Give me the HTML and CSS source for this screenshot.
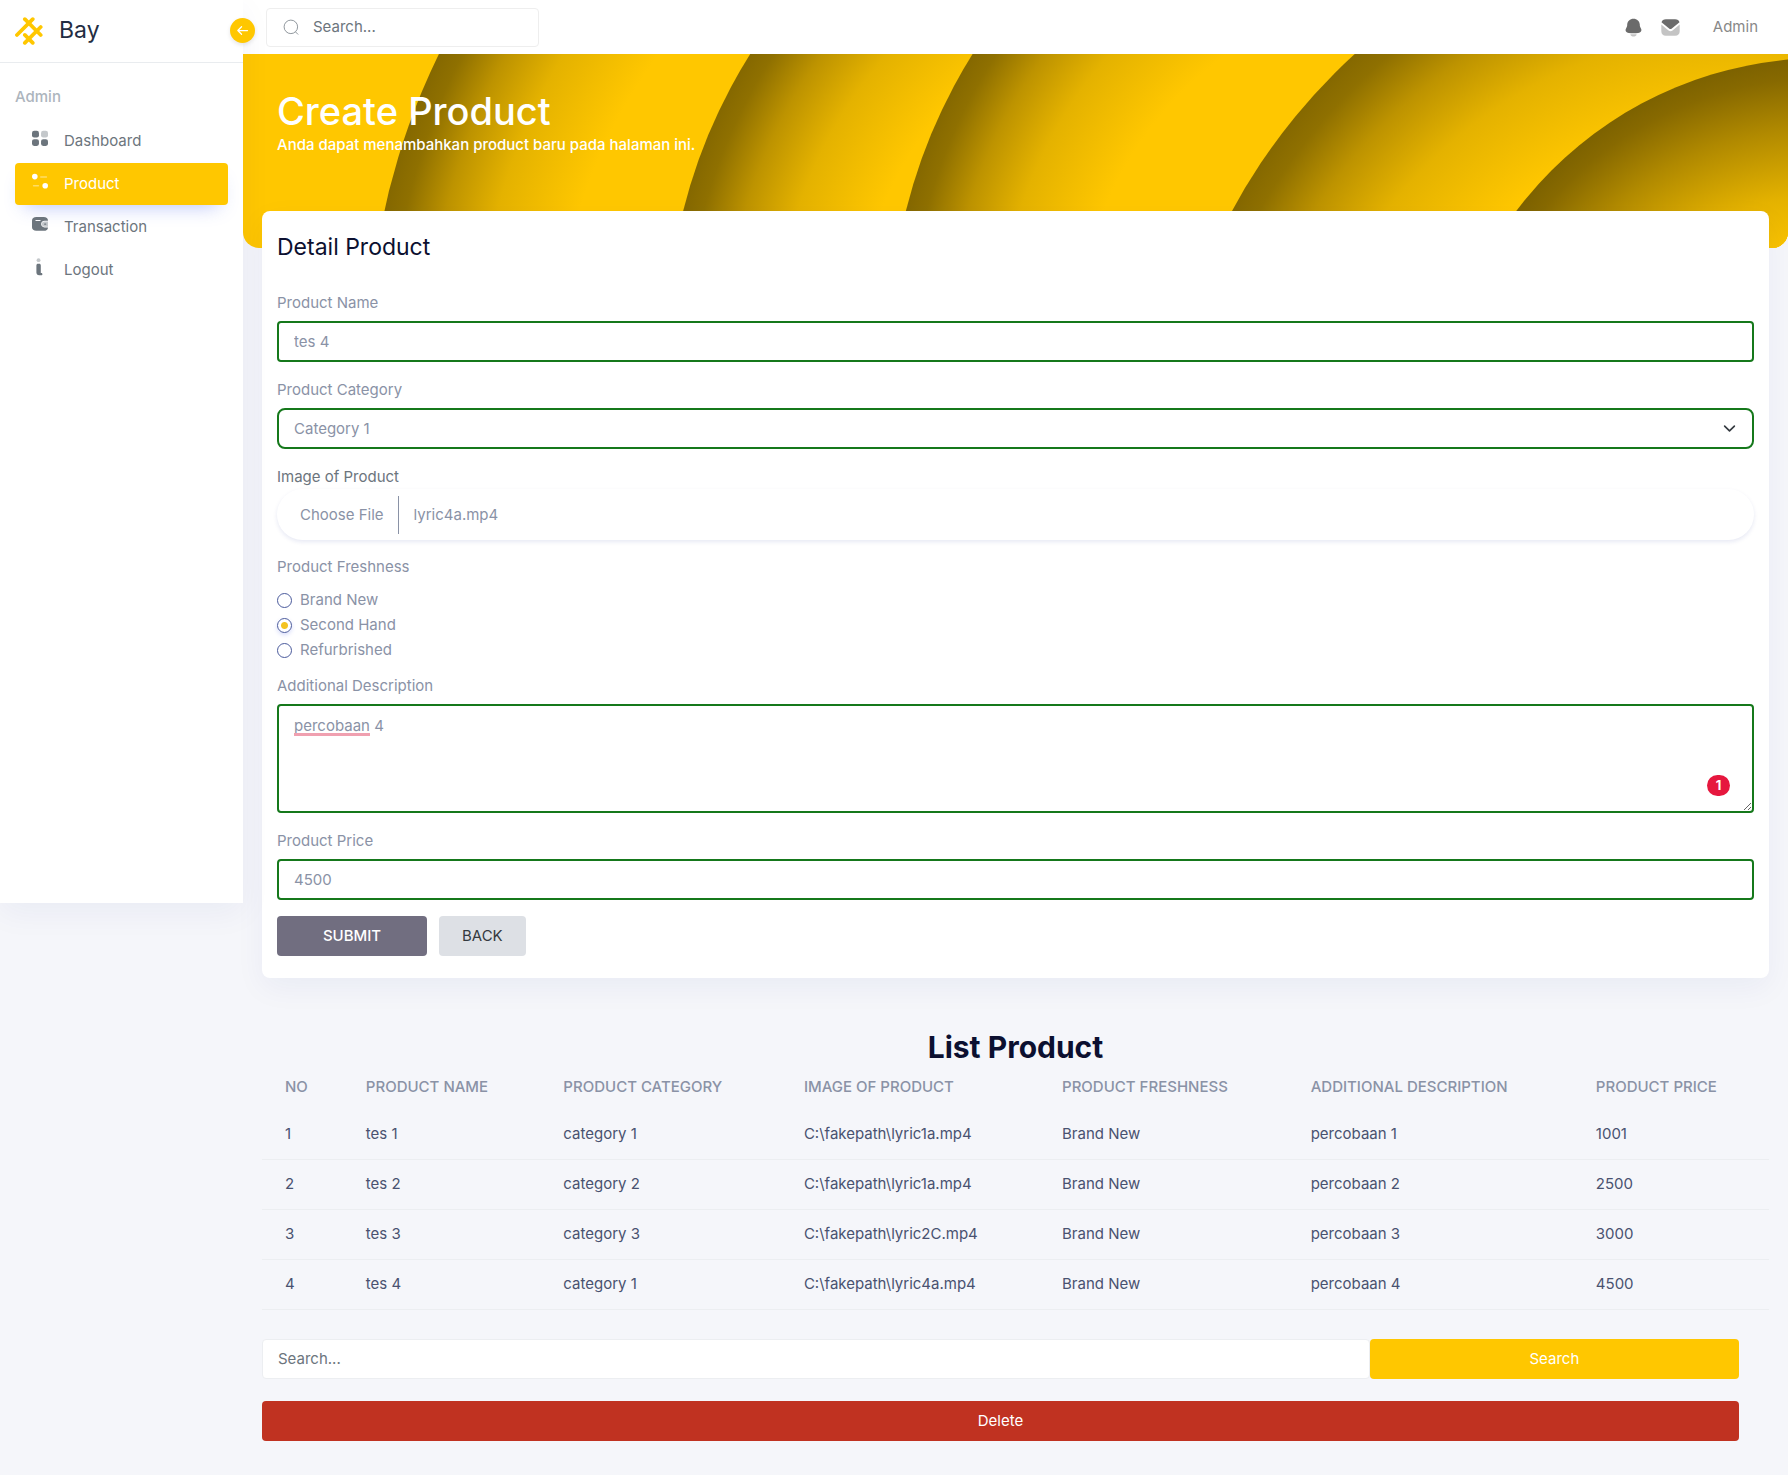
FILE: index.html
```html
<!DOCTYPE html>
<html lang="id">
<head>
<meta charset="utf-8">
<meta name="viewport" content="width=device-width, initial-scale=1">
<title>Create Product</title>
<link rel="stylesheet" href="styles.css">
</head>
<body>
<div class="layout">
  <aside class="sidebar">
    <div class="brand">
      <svg class="brand-logo" viewBox="0 0 30 30" aria-hidden="true">
        <rect x="-0.757" y="19.243" width="28" height="4" rx="2" transform="rotate(-45 -0.757 19.243)"/>
        <rect x="7.728" y="27.728" width="28" height="4" rx="2" transform="rotate(-45 7.728 27.728)"/>
        <rect x="10.537" y="16.395" width="16" height="4" rx="2" transform="rotate(45 10.537 16.395)"/>
        <rect x="10.556" y="-0.556" width="28" height="4" rx="2" transform="rotate(45 10.556 -0.556)"/>
      </svg>
      <h1 class="brand-name">Bay</h1>
      <button class="collapse" type="button" aria-label="Collapse menu">
        <svg viewBox="0 0 24 24" aria-hidden="true"><path d="M4.500 12H20M10.500 6l-6 6 6 6"/></svg>
      </button>
    </div>
    <nav class="menu">
      <p class="menu-title">Admin</p>
      <a class="menu-item" href="#">
        <svg viewBox="0 0 20 20" aria-hidden="true"><rect opacity=".4" x="11.300" y="1" width="8.700" height="8.500" rx="2.700"/><rect x="0" y="1" width="8.700" height="8.500" rx="2.700"/><rect x="0" y="11.500" width="8.700" height="8.500" rx="2.700"/><rect x="11.300" y="11.500" width="8.700" height="8.500" rx="2.700"/></svg>
        Dashboard</a>
      <a class="menu-item active" href="#">
        <svg viewBox="0 0 20 20" aria-hidden="true"><g opacity=".4"><rect x="10" y="4" width="9" height="2" rx="1"/><rect x="1" y="15" width="8" height="2" rx="1"/></g><circle cx="3.500" cy="4.500" r="3.500"/><circle cx="16.500" cy="16" r="3.500"/></svg>
        Product</a>
      <a class="menu-item" href="#">
        <svg viewBox="0 0 20 20" aria-hidden="true"><g transform="translate(0 .5) scale(1 .86)"><path opacity=".4" d="M20 7.500h-4a3.700 3.700 0 000 7.400h4z"/><path d="M14.600 1c3.300 0 5.400 2 5.400 5.200h-4.300a5 5 0 000 9.900H20c0 3.200-2.100 4.900-5.400 4.900H5.400C2.100 21 0 19 0 15.800V6.200C0 3 2.100 1 5.400 1zM10 5.200H5a.8.8 0 000 1.600h5a.8.8 0 000-1.600z"/><rect x="15" y="10.200" width="3" height="1.800" rx=".9"/></g></svg>
        Transaction</a>
      <a class="menu-item" href="#">
        <svg viewBox="0 0 20 20" aria-hidden="true"><circle opacity=".4" cx="8.200" cy="1.500" r="2.400"/><path d="M7.500 6h1.500c1.200 0 2 .8 2 2v9.500h.5c1 0 1.500.5 1.500 1.500s-.5 1.300-1.500 1.300H9c-2.300 0-3.500-1.200-3.500-3.300V8c0-1.200.8-2 2-2z"/></svg>
        Logout</a>
    </nav>
  </aside>

  <div class="page">
    <header class="topbar">
      <label class="top-search">
        <svg viewBox="0 0 24 24" aria-hidden="true"><circle cx="11.800" cy="11.800" r="9"/><path d="M18 18.500l3.500 3.500"/></svg>
        <input type="search" placeholder="Search..." aria-label="Search">
      </label>
      <div class="top-actions">
        <a href="#" aria-label="Notifications"><svg viewBox="0 0 24 24" aria-hidden="true"><path d="M12 2c4 0 7 3 7.200 6.700 0 2 .3 2.700 1.200 4.100 1.800 3-.4 5.200-3 5.400-3.500.5-7.300.5-10.800 0-2.600-.2-4.800-2.400-3-5.400.9-1.400 1.200-2.100 1.200-4.100C5 5 8 2 12 2z"/><path opacity=".4" d="M9 19.800h6c.6 0 .6.500.3 1-1.600 2-5 2-6.600 0-.3-.5-.3-1 .3-1z"/></svg></a>
        <a href="#" aria-label="Messages"><svg viewBox="0 0 24 24" aria-hidden="true"><path opacity=".4" d="M1.500 8.500l8.300 6.800a3.600 3.600 0 004.500 0l8.200-6.800v7.700c0 3.200-2 5.300-5.200 5.300H6.700c-3.200 0-5.200-2.100-5.200-5.300z"/><path d="M6.700 2.500h10.600c2.600 0 4.400 1.300 5 3.400l-8.800 7.300a2.500 2.500 0 01-3.100 0L1.700 5.900c.6-2.100 2.400-3.400 5-3.400z"/></svg></a>
        <a class="user" href="#">Admin</a>
      </div>
    </header>

    <section class="banner">
      <svg class="banner-art" viewBox="0 0 1545 194" preserveAspectRatio="none" aria-hidden="true">
        <defs>
          <radialGradient id="g1" gradientUnits="userSpaceOnUse" cx="825" cy="307" r="700"><stop offset=".73" stop-color="#ffc700"/><stop offset=".843" stop-color="#e4b200"/><stop offset=".914" stop-color="#bd9300"/><stop offset=".97" stop-color="#8f7000"/><stop offset="1" stop-color="#856800"/></radialGradient>
          <radialGradient id="g2" gradientUnits="userSpaceOnUse" cx="964" cy="288" r="540"><stop offset=".65" stop-color="#ffc700"/><stop offset=".796" stop-color="#e4b200"/><stop offset=".889" stop-color="#bd9300"/><stop offset=".963" stop-color="#8f7000"/><stop offset="1" stop-color="#856800"/></radialGradient>
          <radialGradient id="g3" gradientUnits="userSpaceOnUse" cx="1187" cy="287" r="540"><stop offset=".65" stop-color="#ffc700"/><stop offset=".796" stop-color="#e4b200"/><stop offset=".889" stop-color="#bd9300"/><stop offset=".963" stop-color="#8f7000"/><stop offset="1" stop-color="#856800"/></radialGradient>
          <radialGradient id="g4" gradientUnits="userSpaceOnUse" cx="1510" cy="438" r="592"><stop offset=".63" stop-color="#ffc700"/><stop offset=".78" stop-color="#e4b200"/><stop offset=".88" stop-color="#bd9300"/><stop offset=".96" stop-color="#8f7000"/><stop offset="1" stop-color="#856800"/></radialGradient>
          <radialGradient id="g5" gradientUnits="userSpaceOnUse" cx="1580" cy="388" r="384"><stop offset=".48" stop-color="#ffc700"/><stop offset=".64" stop-color="#e4b200"/><stop offset=".82" stop-color="#b08900"/><stop offset=".948" stop-color="#876900"/><stop offset="1" stop-color="#7d6200"/></radialGradient>
        </defs>
        <circle cx="825" cy="307" r="700" fill="url(#g1)"/>
        <circle cx="964" cy="288" r="540" fill="url(#g2)"/>
        <circle cx="1187" cy="287" r="540" fill="url(#g3)"/>
        <circle cx="1510" cy="438" r="592" fill="url(#g4)"/>
        <circle cx="1580" cy="388" r="384" fill="url(#g5)"/>
      </svg>
      <h2>Create Product</h2>
      <p>Anda dapat menambahkan product baru pada halaman ini.</p>
    </section>

    <main class="content">
      <section class="card">
        <h3>Detail Product</h3>
        <form class="product-form">
          <div class="field">
            <label for="name">Product Name</label>
            <input class="control" id="name" type="text" value="tes 4">
          </div>
          <div class="field">
            <label for="category">Product Category</label>
            <div class="select-wrap">
              <select class="control rounded" id="category"><option>Category 1</option><option>Category 2</option><option>Category 3</option></select>
              <svg viewBox="0 0 16 16" aria-hidden="true"><path d="M2 5l6 6 6-6"/></svg>
            </div>
          </div>
          <div class="field file-field">
            <label class="dark" for="image">Image of Product</label>
            <div class="file">
              <button id="image" type="button">Choose File</button>
              <span>lyric4a.mp4</span>
            </div>
          </div>
          <fieldset class="freshness">
            <legend>Product Freshness</legend>
            <label><input type="radio" name="freshness">Brand New</label>
            <label><input type="radio" name="freshness" checked>Second Hand</label>
            <label><input type="radio" name="freshness">Refurbrished</label>
          </fieldset>
          <div class="field">
            <label for="description">Additional Description</label>
            <div class="area-wrap">
              <textarea class="control" id="description" spellcheck="false">percobaan 4</textarea>
              <span class="spell-mark" aria-hidden="true"></span>
              <span class="badge">1</span>
            </div>
          </div>
          <div class="field">
            <label for="price">Product Price</label>
            <input class="control" id="price" type="text" value="4500">
          </div>
          <div class="actions">
            <button class="btn submit" type="button">SUBMIT</button>
            <button class="btn back" type="button">BACK</button>
          </div>
        </form>
      </section>

      <section class="list">
        <h2>List Product</h2>
        <table>
          <thead><tr><th>No</th><th>Product Name</th><th>Product Category</th><th>Image of Product</th><th>Product Freshness</th><th>Additional Description</th><th>Product Price</th></tr></thead>
          <tbody>
            <tr><td>1</td><td>tes 1</td><td>category 1</td><td>C:\fakepath\lyric1a.mp4</td><td>Brand New</td><td>percobaan 1</td><td>1001</td></tr>
            <tr><td>2</td><td>tes 2</td><td>category 2</td><td>C:\fakepath\lyric1a.mp4</td><td>Brand New</td><td>percobaan 2</td><td>2500</td></tr>
            <tr><td>3</td><td>tes 3</td><td>category 3</td><td>C:\fakepath\lyric2C.mp4</td><td>Brand New</td><td>percobaan 3</td><td>3000</td></tr>
            <tr><td>4</td><td>tes 4</td><td>category 1</td><td>C:\fakepath\lyric4a.mp4</td><td>Brand New</td><td>percobaan 4</td><td>4500</td></tr>
          </tbody>
        </table>
        <div class="list-tools">
          <div class="list-search">
            <input type="search" placeholder="Search..." aria-label="Search products">
            <button class="btn search" type="button">Search</button>
          </div>
          <button class="btn delete" type="button">Delete</button>
        </div>
      </section>
    </main>
  </div>
</div>
</body>
</html>
```
FILE: styles.css
```css
* { box-sizing: border-box; }
body {
  margin: 0;
  background: #f5f6fa;
  color: #8a92a6;
  font: 15px/24px Inter, "Liberation Sans", sans-serif;
}
h1, h2, h3, p { margin: 0; }
button, input, select, textarea { font: inherit; color: inherit; }
a { color: inherit; text-decoration: none; }
svg { display: block; flex: none; }

.layout { display: flex; align-items: flex-start; }

/* Sidebar */
.sidebar {
  position: relative;
  z-index: 2;
  flex: none;
  width: 243px;
  min-height: 903px;
  background: #fff;
  box-shadow: 0 10px 30px rgba(17, 38, 146, .05);
}
.brand {
  position: relative;
  display: flex;
  align-items: center;
  gap: 16px;
  height: 63px;
  padding: 0 15px;
  border-bottom: 1px solid #e9ecef;
}
.brand-logo { width: 28px; height: 28px; fill: #ffc700; }
.brand-name { padding-bottom: 2px; color: #232d42; font-size: 23px; font-weight: 400; }
.collapse {
  position: absolute;
  right: -12px;
  top: 18px;
  width: 25px;
  height: 25px;
  padding: 5px;
  border: 0;
  border-radius: 50%;
  background: #ffc700;
  box-shadow: 0 2px 4px rgba(0, 0, 0, .1);
}
.collapse svg { width: 15px; height: 15px; fill: none; stroke: #fff; stroke-width: 2; stroke-linecap: round; stroke-linejoin: round; }
.menu { display: flex; flex-direction: column; gap: 1px; padding: 22px 15px; }
.menu-title { margin-bottom: 10px; color: #adb5bd; font-weight: 500; }
.menu-item {
  display: flex;
  align-items: center;
  gap: 16px;
  height: 42px;
  padding: 0 17px;
  border-radius: 4px;
  color: #6c757d;
}
.menu-item svg { width: 16px; height: 16px; margin-bottom: 6px; fill: currentColor; overflow: visible; }
.menu-item.active { background: #ffc700; color: #fff; box-shadow: 0 10px 20px -10px rgba(58, 87, 232, .4); }

/* Top bar */
.page { flex: 1; min-width: 0; }
.topbar {
  display: flex;
  align-items: center;
  justify-content: space-between;
  height: 54px;
  padding: 0 30px 0 23px;
  background: #fff;
}
.top-search {
  display: flex;
  align-items: center;
  gap: 13px;
  width: 273px;
  height: 39px;
  padding: 0 15px;
  border: 1px solid #eee;
  border-radius: 4px;
  color: #6c757d;
}
.top-search svg { width: 18px; height: 18px; fill: none; stroke: currentColor; stroke-width: 1; }
input[type="search"] { min-width: 0; border: 0; background: none; padding: 0; outline: 0; }
::placeholder { color: #6c757d; opacity: 1; }
.top-search input { flex: 1; }
.top-actions { display: flex; align-items: center; gap: 16px; color: #6b6b6b; }
.top-actions svg { width: 21px; height: 21px; fill: currentColor; }
.user { margin-left: 16px; color: #888; }

/* Banner */
.banner {
  position: relative;
  height: 194px;
  padding: 35px 34px;
  overflow: hidden;
  border-radius: 0 0 16px 16px;
  background: #ffc700;
  color: #fff;
}
.banner-art { position: absolute; inset: 0; width: 100%; height: 100%; }
.banner h2, .banner p { position: relative; }
.banner h2 { font-size: 38px; line-height: 44px; font-weight: 500; }
.banner p { font-weight: 500; }

/* Product form */
.content { margin-top: -37px; padding: 0 19px 35px; }
.card {
  position: relative;
  padding: 20px 15px 22px;
  border-radius: 8px;
  background: #fff;
  box-shadow: 0 10px 30px rgba(17, 38, 146, .05);
}
.card h3 { color: #0c1030; font-size: 23px; line-height: 32px; font-weight: 400; }
.product-form { padding-top: 28px; }
.field { display: flex; flex-direction: column; gap: 6px; margin-bottom: 16px; }
.dark { color: #6c757d; }
.control {
  display: block;
  width: 100%;
  height: 41px;
  padding: 6px 15px;
  border: 2px solid #15781b;
  border-radius: 4px;
  background: #fff;
  outline: 0;
}
.control.rounded { border-radius: 8px; appearance: none; }
.select-wrap, .area-wrap { position: relative; }
.select-wrap svg { position: absolute; right: 18px; top: 14px; width: 13px; height: 13px; fill: none; stroke: #343a40; stroke-width: 2; stroke-linecap: round; stroke-linejoin: round; }
.file-field { gap: 0; margin-bottom: 15px; }
.file {
  display: flex;
  align-items: center;
  height: 51px;
  padding: 0 23px;
  border-radius: 26px;
  background: #fff;
  box-shadow: 0 2px 4px rgba(17, 38, 146, .1);
}
.file button { height: 38px; padding: 0 14px 0 0; border: 0; border-right: 1px solid #8a92a6; background: none; }
.file span { padding-left: 15px; }
.freshness { display: flex; flex-direction: column; gap: 1px; margin: 0 0 12px; padding: 0; border: 0; }
.freshness legend { margin-bottom: 9px; padding: 0; }
.freshness label { display: flex; align-items: center; gap: 8px; }
.freshness input { appearance: none; width: 15px; height: 15px; margin: 0; border: 1px solid #4a5a9c; border-radius: 50%; background: #fff; }
.freshness input:checked { background: radial-gradient(circle, #f4c321 3px, #fff 4px); box-shadow: 0 2px 4px rgba(58, 87, 232, .2); }
textarea.control { height: 109px; padding-top: 8px; resize: vertical; }
.spell-mark { position: absolute; left: 17px; top: 29px; width: 76px; height: 3px; background: #f0a0b0; }
.badge {
  position: absolute;
  right: 24px;
  bottom: 17px;
  width: 23px;
  height: 21px;
  border-radius: 11px;
  background: #e6173e;
  color: #fff;
  font-size: 13px;
  line-height: 21px;
  font-weight: 700;
  text-align: center;
}
.actions { display: flex; gap: 12px; }
.btn { height: 40px; padding: 0 23px; border: 0; border-radius: 4px; color: #fff; }
.submit { width: 150px; background: #716e80; font-weight: 500; }
.back { background: #dde0e5; color: #343a40; }

/* Product list */
.list { padding-top: 51px; }
.list h2 { color: #0c1030; font-size: 30px; line-height: 36px; font-weight: 700; text-align: center; }
table { width: 100%; border-collapse: collapse; }
th, td { padding: 12px 23px; text-align: left; }
th { padding: 10px 23px; font-weight: 500; text-transform: uppercase; }
td { height: 50px; border-bottom: 1px solid #eceef1; color: #495270; }
.list-tools { display: flex; flex-direction: column; gap: 22px; padding: 29px 30px 0 0; }
.list-search { display: flex; }
.list-search input { flex: 1; height: 40px; padding: 0 15px; border: 1px solid #eceef1; border-radius: 4px; background: #fff; }
.search { width: 25%; background: #ffc700; }
.delete { background: #c03221; }
```
